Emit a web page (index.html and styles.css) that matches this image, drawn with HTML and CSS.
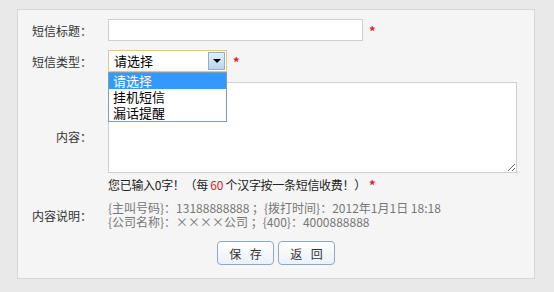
FILE: index.html
```html
<!DOCTYPE html>
<html>
    <head>
        <meta charset="UTF-8">
        <title>短信设置</title>
        <link rel="stylesheet" href="styles.css">
    </head>
    <body>
        <div class="panel">
            <div class="row">
                <span class="label">短信标题：</span>
                <input type="text" class="title-input">
                <span class="req">*</span>
            </div>
            <div class="row">
                <span class="label">短信类型：</span>
                <div class="select-box">
                    <div class="select">
                        <span class="select-text">请选择</span>
                        <span class="select-btn"><span class="arrow"></span></span>
                    </div>
                    <ul class="options">
                        <li class="active">请选择</li>
                        <li>挂机短信</li>
                        <li>漏话提醒</li>
                    </ul>
                </div>
                <span class="req">*</span>
            </div>
            <div class="row row-top">
                <span class="label label-content">内容：</span>
                <textarea class="content"></textarea>
            </div>
            <div class="row count-row">
                <span class="label"></span>
                <p class="count">您已输入0字！（每 <span class="num">60</span> 个汉字按一条短信收费！）<span class="req">*</span></p>
            </div>
            <div class="row desc-row">
                <span class="label">内容说明：</span>
                <div class="desc">
                    <p>{主叫号码}：13188888888 ；{拨打时间}：2012年1月1日 18:18</p>
                    <p>{公司名称}：××××公司 ；{400}：4000888888</p>
                </div>
            </div>
            <div class="buttons">
                <button type="button">保 存</button>
                <button type="button">返 回</button>
            </div>
        </div>
    </body>
</html>
```

FILE: styles.css
```css
*{
    margin: 0;
    padding: 0;
    box-sizing: border-box;
    font-family: "Noto Sans CJK SC", "Noto Sans", sans-serif;
}
body{
    background-color: #e9e9e9;
    padding: 9px 19px 0 17px;
    font-size: 12px;
    color: #333;
}
.panel{
    background-color: #f5f5f5;
    border: 1px solid #d6d6d6;
    height: 270px;
    padding: 9px 0 0 0;
}
.row{
    display: flex;
    align-items: center;
    margin-bottom: 9px;
}
.row-top{
    align-items: flex-start;
    margin-top: 10px;
    margin-bottom: 3px;
}
.label{
    width: 74px;
    margin-right: 16px;
    text-align: right;
    line-height: 17px;
    color: #333;
    flex-shrink: 0;
}
.label-content{
    padding-top: 46px;
}
.req{
    color: #e0222c;
    margin-left: 6px;
    font-size: 13px;
    font-weight: bold;
}
.title-input{
    width: 255px;
    height: 22px;
    border: 1px solid #cfcfcf;
    background-color: #fff;
}
.select-box{
    position: relative;
    width: 119px;
    height: 22px;
}
.select{
    display: flex;
    align-items: center;
    height: 22px;
    border: 1px solid #e2c77e;
    background-color: #fff;
    padding: 0 1px 0 5px;
}
.select-text{
    flex: 1;
    font-size: 13px;
    color: #000;
    line-height: 20px;
}
.select-btn{
    display: flex;
    align-items: center;
    justify-content: center;
    width: 17px;
    height: 18px;
    border: 1px solid #93aecb;
    background: linear-gradient(#e4eefa, #bcd3ee);
}
.arrow{
    width: 0;
    height: 0;
    border-left: 4px solid transparent;
    border-right: 4px solid transparent;
    border-top: 4px solid #000;
}
.options{
    position: absolute;
    top: 22px;
    left: 0;
    width: 119px;
    list-style: none;
    background-color: #fff;
    border: 1px solid #7f9db9;
    z-index: 2;
}
.options li{
    height: 16px;
    line-height: 16px;
    padding-left: 4px;
    font-size: 13px;
    color: #000;
}
.options li.active{
    background-color: #3399ff;
    color: #fff;
}
.content{
    width: 409px;
    height: 91px;
    border: 1px solid #cfcfcf;
    background-color: #fff;
    resize: both;
}
.count-row{
    margin-bottom: 8px;
}
.count{
    line-height: 17px;
    color: #222;
    letter-spacing: -0.3px;
}
.count .num{
    color: #e0222c;
}
.count .req{
    margin-left: 3px;
}
.desc-row{
    margin-bottom: 12px;
}
.desc{
    color: #777;
    font-size: 12px;
    line-height: 14px;
}
.buttons{
    display: flex;
    justify-content: center;
    gap: 4px;
}
.buttons button{
    width: 57px;
    height: 24px;
    border: 1px solid #8ea9c1;
    border-radius: 4px;
    background: linear-gradient(#ffffff, #eaf1f7);
    color: #333;
    font-size: 12px;
    letter-spacing: 3px;
    padding-left: 3px;
    cursor: pointer;
}
```
